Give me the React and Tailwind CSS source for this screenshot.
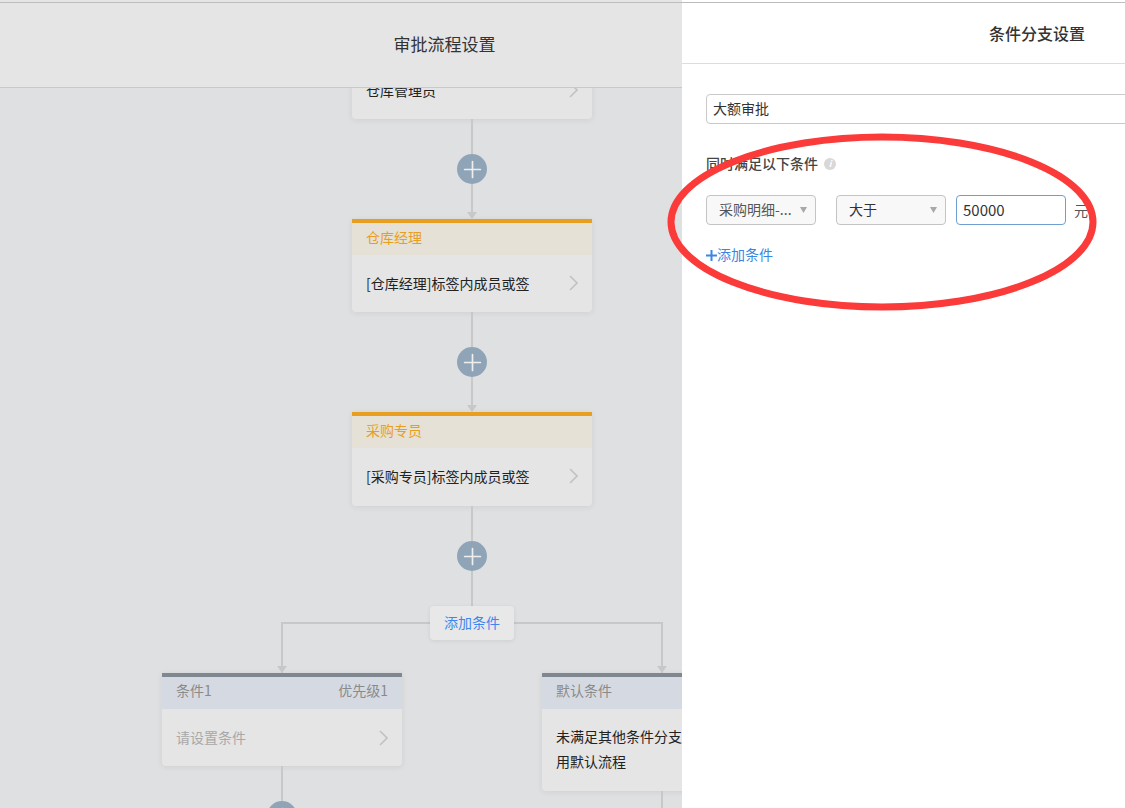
import { Plus } from 'lucide-react';

const cjk = { fontFamily: '"Noto Sans CJK SC", sans-serif' };

function Arrow() {
  return (
    <svg width="10" height="7" viewBox="0 0 10 7" className="block shrink-0">
      <path d="M0 0h10L5 7z" fill="#c8c8c8" />
    </svg>
  );
}

function Chevron() {
  return (
    <svg width="9" height="16" viewBox="0 0 9 16" className="block shrink-0">
      <path d="M1 1l7 7-7 7" fill="none" stroke="#c2c2c2" strokeWidth="1.6" />
    </svg>
  );
}

function Line({ h }) {
  return <div className={`w-0.5 bg-[#c8c8c8] shrink-0 ${h}`} />;
}

function AddButton() {
  return (
    <div className="w-[30px] h-[30px] rounded-full bg-[#90a4b8] flex items-center justify-center shrink-0">
      <Plus size={27} strokeWidth={1.5} className="text-[#eeeeee]" />
    </div>
  );
}

function ApproverCard({ title, body, tall }) {
  return (
    <div className={`w-60 shrink-0 rounded-b bg-[#e5e5e5] shadow-[0_1px_6px_rgba(0,0,0,0.08)] overflow-hidden ${tall ? 'h-[94px]' : 'h-[93px]'}`}>
      <div className="h-9 border-t-4 border-[#e89f1f] bg-[#e5e1d7] pl-3.5 pb-1 flex items-center text-sm text-[#e89f1f]">
        {title}
      </div>
      <div className="h-[57px] pl-3.5 pr-3.5 pb-0.5 flex items-center justify-between text-sm text-[#222222]">
        <span>{body}</span>
        <Chevron />
      </div>
    </div>
  );
}

function ConditionCard({ right, tall, children }) {
  return (
    <div className={`w-60 shrink-0 rounded-b bg-[#e5e5e5] shadow-[0_1px_6px_rgba(0,0,0,0.08)] overflow-hidden ${tall ? 'h-[118px]' : 'h-[93px]'}`}>
      <div className="h-9 border-t-4 border-[#7f8890] bg-[#d5dae2] px-3.5 pb-1.5 flex items-center justify-between text-sm text-[#8a8a8a]">
        <span>{tall ? '默认条件' : '条件1'}</span>
        <span>{right}</span>
      </div>
      {children}
    </div>
  );
}

function Flow() {
  return (
    <div className="w-[944px] shrink-0 flex flex-col items-center mt-[-62px]">
      {/* first card, top part is under the header */}
      <div className="w-60 h-[93px] shrink-0 rounded-b bg-[#e5e5e5] shadow-[0_1px_6px_rgba(0,0,0,0.08)] pl-3.5 pr-3.5 flex items-center justify-between text-sm text-[#222222] pt-[35px]">
        <span>仓库管理员</span>
        <Chevron />
      </div>
      <Line h="h-[35px]" />
      <AddButton />
      <Line h="h-7" />
      <Arrow />
      <ApproverCard title="仓库经理" body="[仓库经理]标签内成员或签" />
      <Line h="h-[35px]" />
      <AddButton />
      <Line h="h-7" />
      <Arrow />
      <ApproverCard tall title="采购专员" body="[采购专员]标签内成员或签" />
      <Line h="h-[35px]" />
      <AddButton />
      <Line h="h-[35px]" />

      {/* branch */}
      <div className="relative w-[382px] h-[67px] shrink-0 flex justify-center">
        <div className="absolute left-0 right-0 top-4 h-[51px] border-t-2 border-x-2 border-[#c8c8c8]" />
        <div className="relative w-[84px] h-[34px] rounded bg-[#e8e8e8] shadow-[0_1px_4px_rgba(0,0,0,0.08)] pb-0.5 flex items-center justify-center text-sm text-[#3f86f0]">
          添加条件
        </div>
        <div className="absolute left-[-4px] bottom-0"><Arrow /></div>
        <div className="absolute right-[-4px] bottom-0"><Arrow /></div>
      </div>

      <div className="w-[620px] flex justify-between items-start shrink-0">
        <div className="flex flex-col items-center">
          <ConditionCard right="优先级1">
            <div className="h-[57px] pl-3.5 pr-3.5 flex items-center justify-between text-sm text-[#a8a8a8]">
              <span className="pb-0.5">请设置条件</span>
              <Chevron />
            </div>
          </ConditionCard>
          <Line h="h-[35px]" />
          <AddButton />
        </div>
        <div className="flex flex-col items-center">
          <ConditionCard tall>
            <div className="px-3.5 pt-[15px] text-sm leading-[25px] text-[#222222]">
              未满足其他条件分支的情况，将使用默认流程
            </div>
          </ConditionCard>
          <Line h="h-[35px]" />
        </div>
      </div>
    </div>
  );
}

function SettingsPanel() {
  return (
    <div className="relative w-[710px] shrink-0 bg-white">
      <div className="h-[61px] border-b border-[#dddddd] flex items-center justify-center text-base font-medium text-[#333333]">
        条件分支设置
      </div>
      <div className="pl-6 pt-[30px]">
        <div className="h-[30px] border border-[#c9c9c9] rounded-sm pb-0.5 flex items-center px-1.5 text-sm text-[#333333]">
          大额审批
        </div>
        <div className="mt-[29px] h-5 flex items-center gap-1.5 text-sm font-medium text-[#444444]">
          同时满足以下条件
          <span className="w-3 h-3 mt-0.5 rounded-full bg-[#d8d8d8] flex items-center justify-center text-[9px] italic font-bold text-white">i</span>
        </div>
        <div className="mt-[22px] flex items-center text-sm text-[#555555]">
          <div className="w-[110px] h-[30px] border border-[#c4c4c4] rounded-sm bg-[#f8f8f8] flex items-center justify-between pl-3 pr-2">
            <span className="pb-0.5">采购明细-...</span>
            <svg width="7" height="6" viewBox="0 0 7 6"><path d="M0 0h7L3.5 6z" fill="#a8a8a8" /></svg>
          </div>
          <div className="ml-5 w-[110px] h-[30px] border border-[#c4c4c4] rounded-sm bg-[#f8f8f8] flex items-center justify-between pl-3 pr-2 text-[#333333]">
            <span className="pb-0.5">大于</span>
            <svg width="7" height="6" viewBox="0 0 7 6"><path d="M0 0h7L3.5 6z" fill="#a8a8a8" /></svg>
          </div>
          <div className="ml-2.5 w-[110px] h-[30px] border border-[#6f9fd0] rounded-sm flex items-center px-1.5 text-[15px] text-[#333333]">
            50000
          </div>
          <span className="ml-2 text-[#555555]">元</span>
        </div>
        <div className="mt-[19px] flex items-center text-sm text-[#3b86e0]">
          <svg width="11" height="11" viewBox="0 0 11 11" className="block shrink-0">
            <path d="M5.5 0v11M0 5.5h11" stroke="#3b86e0" strokeWidth="2" />
          </svg>
          <span className="pb-0.5">添加条件</span>
        </div>
      </div>
    </div>
  );
}

export default function App() {
  return (
    <div style={cjk} className="relative w-[1125px] h-[808px] overflow-hidden bg-white flex flex-col">
      <div className="h-0.5 shrink-0 flex">
        <div className="w-[682px] bg-[#e5e5e5]" />
      </div>
      <div className="h-px bg-[#bdbdbd] shrink-0" />
      <div className="flex flex-1 min-h-0">
        <div className="w-[682px] shrink-0 bg-[#dfe0e2] flex flex-col overflow-hidden">
          <div className="relative z-10 h-[85px] shrink-0 bg-[#e5e5e5] border-b border-[#c8c8c8] flex items-center justify-center pb-0.5 text-[17px] text-[#333333] pl-[207px]">
            审批流程设置
          </div>
          <Flow />
        </div>
        <SettingsPanel />
      </div>

      {/* red hand-drawn marker over the screenshot */}
      <svg width="1125" height="808" className="absolute left-0 top-0 pointer-events-none">
        <ellipse cx="882" cy="222" rx="211" ry="85" fill="none" stroke="#fb3a3a" strokeWidth="7" />
      </svg>
    </div>
  );
}
